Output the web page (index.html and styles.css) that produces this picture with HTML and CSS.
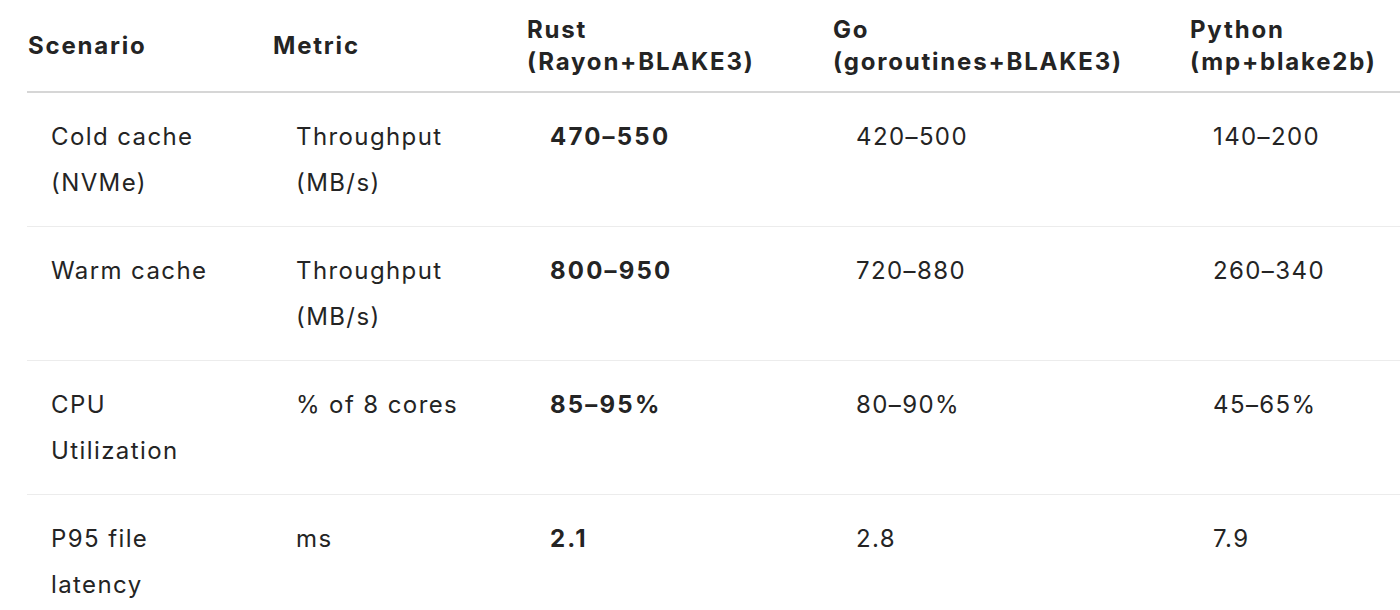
FILE: index.html
```html
<!DOCTYPE html>
<html lang="en">
<head>
<meta charset="utf-8">
<title>Benchmark table</title>
<link rel="stylesheet" href="styles.css">
</head>
<body>
<div class="wrap">
<table class="bench">
  <colgroup>
    <col class="c1"><col class="c2"><col class="c3"><col class="c4"><col class="c5">
  </colgroup>
  <thead>
    <tr>
      <th>Scenario</th>
      <th>Metric</th>
      <th>Rust<br>(Rayon+BLAKE3)</th>
      <th>Go<br>(goroutines+BLAKE3)</th>
      <th>Python<br>(mp+blake2b)</th>
    </tr>
  </thead>
  <tbody>
    <tr>
      <td>Cold cache<br>(NVMe)</td>
      <td>Throughput<br>(MB/s)</td>
      <td><strong>470–550</strong></td>
      <td>420–500</td>
      <td>140–200</td>
    </tr>
    <tr>
      <td>Warm cache</td>
      <td>Throughput<br>(MB/s)</td>
      <td><strong>800–950</strong></td>
      <td>720–880</td>
      <td>260–340</td>
    </tr>
    <tr>
      <td>CPU<br>Utilization</td>
      <td>% of 8 cores</td>
      <td><strong>85–95%</strong></td>
      <td>80–90%</td>
      <td>45–65%</td>
    </tr>
    <tr>
      <td>P95 file<br>latency</td>
      <td>ms</td>
      <td><strong>2.1</strong></td>
      <td>2.8</td>
      <td>7.9</td>
    </tr>
  </tbody>
</table>
</div>
</body>
</html>
```
FILE: styles.css
```css
html, body {
  margin: 0;
  padding: 0;
  background: #fff;
  overflow: hidden;
}
body {
  font-family: Inter, "Noto Sans", sans-serif;
  color: #242424;
}
.wrap {
  padding-left: 27px;
  width: 1500px;
}
.bench {
  border-collapse: collapse;
  table-layout: fixed;
  width: 1462px;
}
.c1 { width: 245px; }
.c2 { width: 254px; }
.c3 { width: 306px; }
.c4 { width: 357px; }
.c5 { width: 300px; }
.bench th {
  text-align: left;
  font-weight: 700;
  font-size: 24px;
  letter-spacing: 1.8px;
  line-height: 32px;
  padding: 14px 0 13px 1px;
  vertical-align: middle;
  border-bottom: 2px solid #d6d6d6;
  white-space: nowrap;
}
.bench td {
  text-align: left;
  font-size: 24px;
  letter-spacing: 1.4px;
  line-height: 46px;
  padding: 21px 0 20px 24px;
  vertical-align: top;
  border-bottom: 1px solid #ececec;
  white-space: nowrap;
}
.bench td strong {
  font-weight: 700;
  letter-spacing: 2.2px;
}
```
